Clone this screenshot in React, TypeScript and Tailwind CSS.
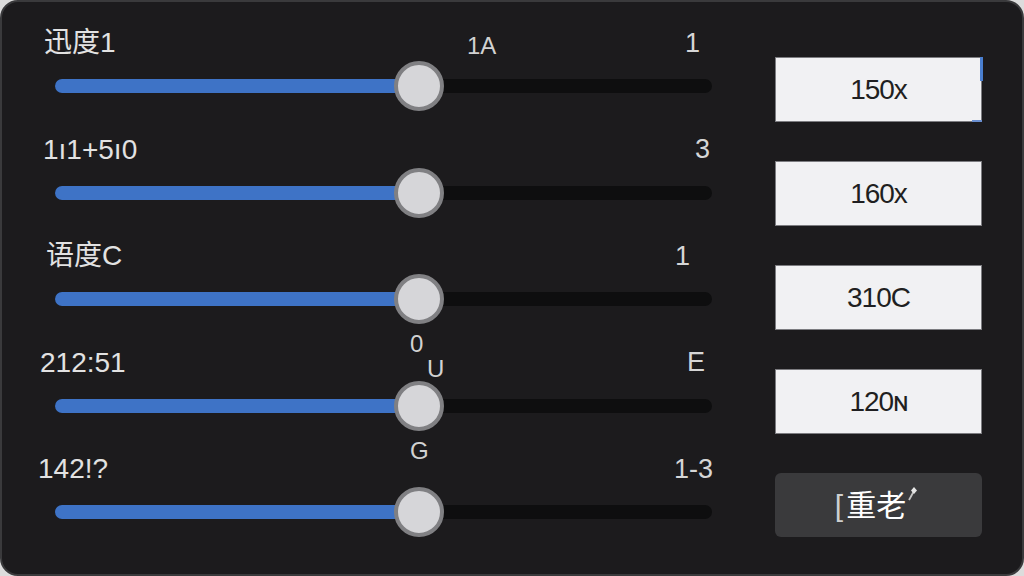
import React from "react";

type Stray = { text: string; left: number; top: number };
type Row = { label: string; lm: number; right: string; rm: number; stray: Stray[] };

const rows: Row[] = [
  { label: "迅度1", lm: 4, right: "1", rm: 14, stray: [{ text: "1A", left: 427, top: 32 }] },
  { label: "1ı1+5ı0", lm: 3, right: "3", rm: 4, stray: [] },
  { label: "语度C", lm: 6, right: "1", rm: 24, stray: [] },
  {
    label: "212:51",
    lm: 0,
    right: "E",
    rm: 9,
    stray: [
      { text: "0", left: 370, top: 10 },
      { text: "U", left: 387, top: 35 },
      { text: "G", left: 370, top: 117 },
    ],
  },
  { label: "142!?", lm: -2, right: "1-3", rm: 1, stray: [] },
];

const boxes = ["150x", "160x", "310C", "120ɴ"];

const font = { fontFamily: '"Liberation Sans", "Noto Sans CJK SC", sans-serif' };

export default function App() {
  return (
    <div className="w-[1024px] h-[576px] bg-[#dcdcdc]" style={font}>
      <div className="w-full h-full rounded-[18px] border-2 border-[#3a3a3c] bg-[#1c1b1d] flex overflow-hidden">
        <div className="w-[712px] pl-[38px] flex flex-col">
          {rows.map((r, i) => (
            <div key={i} className="relative h-[106.5px] flex flex-col">
              <div className="mt-[26px] h-[30px] flex items-center justify-between text-[#e2e2e2] text-[28px] leading-none">
                <span style={{ marginLeft: r.lm }}>{r.label}</span>
                <span className="text-[#d6d6d6] text-[27px]" style={{ marginRight: r.rm }}>
                  {r.right}
                </span>
              </div>
              {r.stray.map((s, j) => (
                <span
                  key={j}
                  className="absolute z-10 text-[#d2d2d2] text-[24px] leading-none"
                  style={{ left: s.left, top: s.top }}
                >
                  {s.text}
                </span>
              ))}
              <div className="relative mt-[21px] ml-[15px] w-[657px] h-[14px] rounded-full bg-[#0e0e0f]">
                <div className="absolute left-0 top-0 h-[14px] w-[364px] rounded-l-full bg-[#3e73c6]" />
                <div className="absolute left-[339px] top-[-18px] w-[50px] h-[50px] rounded-full bg-[#d6d6d9] border-[4px] border-[#808083]" />
              </div>
            </div>
          ))}
        </div>
        <div className="ml-[61px] w-[207px] pt-[55px] flex flex-col gap-[39px]">
          {boxes.map((b, i) => (
            <div
              key={i}
              className="relative h-[65px] bg-[#f1f1f3] border border-[#7c7c80] flex items-center justify-center text-[#1f1f21] text-[28px]"
            >
              {i === 0 && (
                <>
                  <div className="absolute right-[-2px] top-[-1px] w-[3px] h-[24px] bg-[#4a7fd0]" />
                  <div className="absolute right-[-1px] bottom-[-1px] w-[10px] h-[2px] bg-[#6a8fd0]" />
                </>
              )}
              <span className="tracking-[-1px]">{b}</span>
            </div>
          ))}
          <div className="h-[64px] rounded-[6px] bg-[#3a3a3c] flex items-center justify-center text-white text-[30px] pr-[4px]">
            <span className="text-[#cfcfcf] mr-[3px]">[</span>
            <span>重老</span>
            <svg width="12" height="22" viewBox="0 0 12 22" className="self-start mt-[14px]">
              <path d="M3 13 L8 4" stroke="#c4c4c4" strokeWidth="1.8" />
              <path d="M8 0 L11 3.5 L8 7 L5 3.5 Z" fill="#e4e4e4" />
            </svg>
          </div>
        </div>
      </div>
    </div>
  );
}
